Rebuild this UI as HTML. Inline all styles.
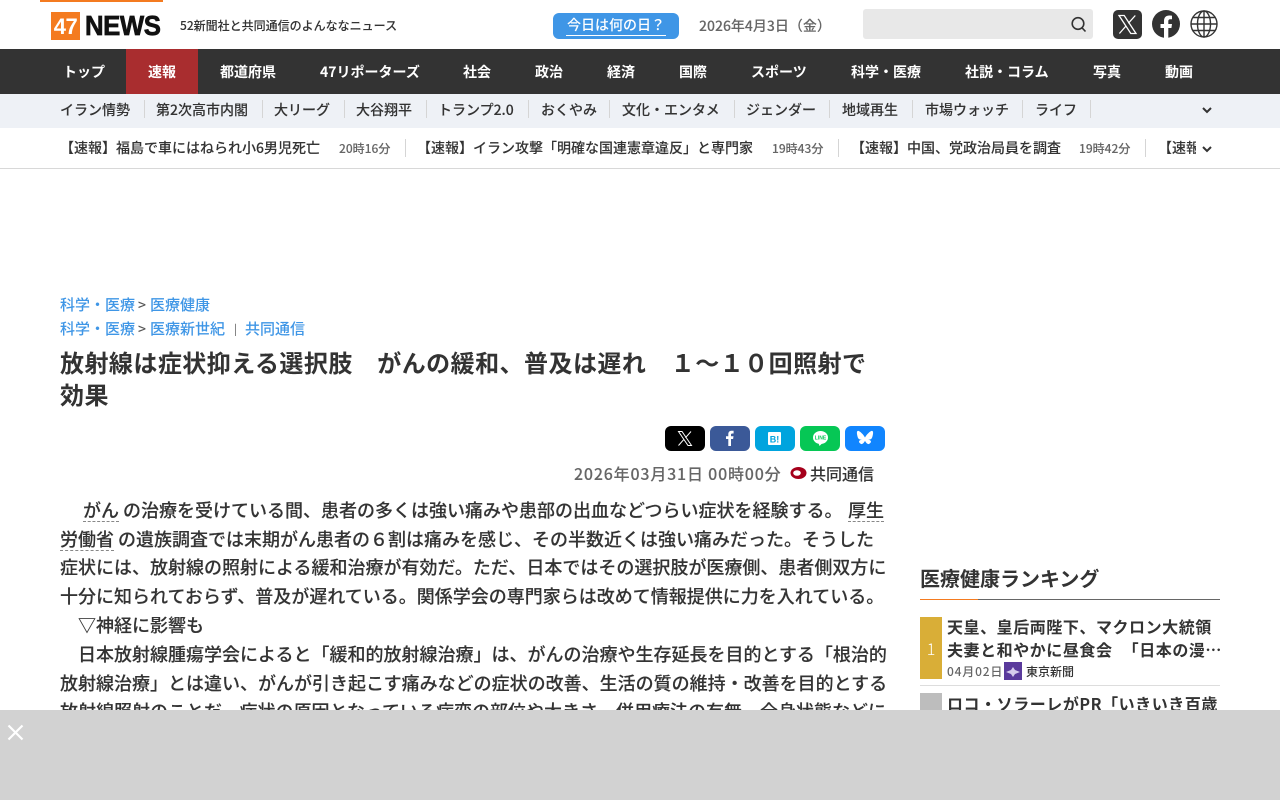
<!DOCTYPE html>
<html lang="ja"><head><meta charset="utf-8"><title>47NEWS</title>
<style>
*{margin:0;padding:0;box-sizing:border-box}
html,body{width:1280px;height:800px;overflow:hidden;background:#fff}
body{font-family:"Noto Sans CJK JP",sans-serif;color:#333;position:relative;font-weight:500}
.a{position:absolute;white-space:nowrap}
.nav{color:#fff;font-size:14px;top:49px;height:45px;line-height:46px;font-weight:700;text-align:center}
.sub{font-size:14px;top:94px;line-height:32px;color:#333;-webkit-text-stroke:.08px #333}
.sep{position:absolute;width:1px;background:#d5d5d5}
.tk{font-size:14px;top:128px;line-height:41px;color:#333;-webkit-text-stroke:.08px #333}
.tm{font-size:12px;top:128px;line-height:42px;color:#666;-webkit-text-stroke:.08px #666}
.b{font-size:18px;line-height:29px;height:29px;color:#333;left:60px;-webkit-text-stroke:.12px #333}
.u{display:inline-block;height:26px;line-height:29px;vertical-align:top;border-bottom:1px dashed #888}
.lnk{color:#3f96e6;font-size:15px}
.sh{position:absolute;top:426px;width:40px;height:25px;border-radius:6px}
.r{left:947px;font-size:16px;line-height:24px;font-weight:700;color:#333;letter-spacing:.55px}
</style></head><body>
<div class="a" style="left:40px;top:0;width:123px;height:2px;background:#f47b20"></div>
<div class="a" style="left:51px;top:12px;width:29px;height:28px;background:#f47b20;color:#fff;font:700 22px/29px 'Liberation Sans',sans-serif;text-align:center;letter-spacing:-.5px">47</div>
<div class="a" style="left:85px;top:10px;font:700 28px/32px 'Liberation Sans',sans-serif;color:#111;-webkit-text-stroke:.7px #111;letter-spacing:-.5px;transform:scaleX(.92);transform-origin:left">NEWS</div>
<div class="a" style="left:180px;top:16px;font-size:12px;line-height:20px;color:#333;-webkit-text-stroke:.06px #333">52新聞社と共同通信のよんななニュース</div>
<div class="a" style="left:553px;top:13px;width:126px;height:26px;background:#3f96e6;border-radius:6px;color:#fff;font-size:14px;line-height:25px;text-align:center"><span style="border-bottom:1px solid #fff;padding:0 1px">今日は何の日？</span></div>
<div class="a" style="left:699px;top:15px;font-size:14px;line-height:22px;color:#666;-webkit-text-stroke:.08px #666">2026年4月3日（金）</div>
<div class="a" style="left:863px;top:9px;width:230px;height:30px;background:#e8e8e8;border-radius:3px"></div>
<svg class="a" style="left:1070px;top:16px" width="17" height="17" viewBox="0 0 17 17" fill="none" stroke="#333" stroke-width="1.6"><circle cx="8" cy="7.5" r="5.8"/><path d="M12 11.800l3.500 3.700"/></svg>
<svg class="a" style="left:1113px;top:10px" width="29" height="29" viewBox="0 0 29 29"><rect width="29" height="29" rx="5" fill="#333"/><path d="M6 5.500h5.200l11.800 18h-5.200zM22.300 5.500l-7 7.800M13 16l-6.600 7.500" fill="none" stroke="#fff" stroke-width="1.300"/></svg>
<svg class="a" style="left:1152px;top:10px" width="28" height="28" viewBox="0 0 28 28"><circle cx="14" cy="14" r="14" fill="#333"/><path d="M12 28V18H8.500v-4H12v-3c0-3.600 2.100-5.500 5.300-5.500 1.500 0 2.700.2 2.700.2V9.200h-1.600c-1.600 0-2.100 1-2.100 2V14h3.700l-.6 4h-3.100v10z" fill="#fff"/></svg>
<svg class="a" style="left:1190px;top:10px" width="28" height="28" viewBox="0 0 28 28" fill="none" stroke="#333" stroke-width="1.400"><circle cx="14" cy="14" r="13"/><ellipse cx="14" cy="14" rx="6.500" ry="13"/><path d="M14 1v26M1 14h26M3 7.500h22M3 20.500h22"/></svg>

<div class="a" style="left:0;top:49px;width:1280px;height:45px;background:#333"></div>
<div class="a" style="left:126px;top:49px;width:72px;height:45px;background:#a92d2f"></div>
<div class="a nav" style="left:63px">トップ</div>
<div class="a nav" style="left:148px">速報</div>
<div class="a nav" style="left:220px">都道府県</div>
<div class="a nav" style="left:320px">47リポーターズ</div>
<div class="a nav" style="left:463px">社会</div>
<div class="a nav" style="left:535px">政治</div>
<div class="a nav" style="left:607px">経済</div>
<div class="a nav" style="left:679px">国際</div>
<div class="a nav" style="left:751px">スポーツ</div>
<div class="a nav" style="left:851px">科学・医療</div>
<div class="a nav" style="left:965px">社説・コラム</div>
<div class="a nav" style="left:1093px">写真</div>
<div class="a nav" style="left:1165px">動画</div>

<div class="a" style="left:0;top:94px;width:1280px;height:34px;background:#eef1f6"></div>
<div class="a sub" style="left:60px">イラン情勢</div><div class="sep" style="left:144px;top:100px;height:18px"></div>
<div class="a sub" style="left:156px">第2次高市内閣</div><div class="sep" style="left:262px;top:100px;height:18px"></div>
<div class="a sub" style="left:274px">大リーグ</div><div class="sep" style="left:344px;top:100px;height:18px"></div>
<div class="a sub" style="left:356px">大谷翔平</div><div class="sep" style="left:426px;top:100px;height:18px"></div>
<div class="a sub" style="left:438px">トランプ2.0</div><div class="sep" style="left:528px;top:100px;height:18px"></div>
<div class="a sub" style="left:541px">おくやみ</div><div class="sep" style="left:609px;top:100px;height:18px"></div>
<div class="a sub" style="left:622px">文化・エンタメ</div><div class="sep" style="left:734px;top:100px;height:18px"></div>
<div class="a sub" style="left:746px">ジェンダー</div><div class="sep" style="left:829px;top:100px;height:18px"></div>
<div class="a sub" style="left:842px">地域再生</div><div class="sep" style="left:912px;top:100px;height:18px"></div>
<div class="a sub" style="left:925px">市場ウォッチ</div><div class="sep" style="left:1022px;top:100px;height:18px"></div>
<div class="a sub" style="left:1035px">ライフ</div><div class="sep" style="left:1090px;top:100px;height:18px"></div>
<svg class="a" style="left:1201px;top:106px" width="12" height="10" viewBox="0 0 12 10" fill="none" stroke="#333" stroke-width="2"><path d="M2 2l4 4 4-4"/></svg>

<div class="a tk" style="left:60px">【速報】福島で車にはねられ小6男児死亡</div><div class="a tm" style="left:339px">20時16分</div><div class="sep" style="left:405px;top:139px;height:18px"></div>
<div class="a tk" style="left:417px">【速報】イラン攻撃「明確な国連憲章違反」と専門家</div><div class="a tm" style="left:772px">19時43分</div><div class="sep" style="left:838px;top:139px;height:18px"></div>
<div class="a tk" style="left:851px">【速報】中国、党政治局員を調査</div><div class="a tm" style="left:1079px">19時42分</div><div class="sep" style="left:1145px;top:139px;height:18px"></div>
<div class="a" style="left:1158px;top:128px;width:38px;height:40px;overflow:hidden"><div class="a tk" style="left:0;top:0">【速報】</div></div>
<svg class="a" style="left:1201px;top:145px" width="12" height="10" viewBox="0 0 12 10" fill="none" stroke="#333" stroke-width="2"><path d="M2 2l4 4 4-4"/></svg>
<div class="a" style="left:0;top:168px;width:1280px;height:1px;background:#d8d8d8"></div>

<div class="a lnk" style="left:60px;top:294px;line-height:22px">科学・医療<span class="a" style="left:78px;top:0;color:#555;font-size:14px">&gt;</span><span class="a" style="left:90px;top:0">医療健康</span></div>
<div class="a lnk" style="left:60px;top:318px;line-height:22px">科学・医療<span class="a" style="left:78px;top:0;color:#555;font-size:14px">&gt;</span><span class="a" style="left:90px;top:0">医療新世紀</span><span class="a" style="left:174px;top:0;color:#555;font-size:11px;font-weight:400">|</span><span class="a" style="left:185px;top:0">共同通信</span></div>

<div class="a" style="left:60px;top:344px;font-size:24px;line-height:36px;font-weight:700;color:#333;letter-spacing:.46px">放射線は症状抑える選択肢　がんの緩和、普及は遅れ　１～１０回照射で</div>
<div class="a" style="left:60px;top:376px;font-size:24px;line-height:36px;font-weight:700;color:#333;letter-spacing:.46px">効果</div>

<div class="sh" style="left:665px;background:#000"><svg width="40" height="25" viewBox="0 0 40 25"><path d="M13.500 5.500h3.500l9.500 14h-3.500zM26 5.500l-5.600 6.300M18.500 13.800l-5 5.700" fill="none" stroke="#fff" stroke-width="1"/></svg></div>
<div class="sh" style="left:710px;background:#3b5998"><svg width="40" height="25" viewBox="0 0 40 25"><path d="M18.300 20v-7h-2.300V10.200h2.300V8.300c0-2.300 1.300-3.500 3.300-3.500h2v2.700h-1.300c-1 0-1.300.5-1.300 1.200v1.500h2.500l-.4 2.800h-2.100v7z" fill="#fff"/></svg></div>
<div class="sh" style="left:755px;background:#00a4de"><svg width="40" height="25" viewBox="0 0 40 25"><rect x="13" y="6" width="13" height="13" rx="1" fill="#fff"/><text x="19.500" y="16.500" font-size="9" font-weight="700" fill="#00a4de" text-anchor="middle" font-family="Liberation Sans">B!</text></svg></div>
<div class="sh" style="left:800px;background:#06c755"><svg width="40" height="25" viewBox="0 0 40 25"><ellipse cx="20.500" cy="11.500" rx="7.500" ry="6.500" fill="#fff"/><path d="M18.500 17l1 3 3-3z" fill="#fff"/><text x="20.500" y="13.500" font-size="5" font-weight="700" fill="#06c755" text-anchor="middle" font-family="Liberation Sans">LINE</text></svg></div>
<div class="sh" style="left:845px;background:#1185fe"><svg width="40" height="25" viewBox="0 0 40 25"><path d="M20 11.500c-.8-1.700-3.200-4.600-5.200-5.900-1.900-1.300-2.900-.8-2.900 1.300 0 1.300.7 4.500 1.300 5.300.7 1.100 2.300 1.500 3.700 1.400-2.600.4-3.600 1.900-2.300 3.300 2.100 2.400 3.900.8 5.400-2 1.500 2.800 3.300 4.400 5.400 2 1.300-1.400.3-2.900-2.300-3.300 1.400.1 3-.3 3.700-1.400.6-.8 1.300-4 1.300-5.300 0-2.100-1-2.600-2.900-1.300-2 1.300-4.400 4.200-5.200 5.900z" fill="#fff"/></svg></div>

<div class="a" style="left:574px;top:461px;font-size:16px;line-height:24px;color:#666;letter-spacing:.8px;-webkit-text-stroke:.08px #666">2026年03月31日 00時00分</div>
<svg class="a" style="left:790px;top:466px" width="17" height="14" viewBox="0 0 17 14"><ellipse cx="8.500" cy="7" rx="8" ry="6" fill="#a5001b"/><ellipse cx="7" cy="7" rx="3.800" ry="2.800" fill="#fff"/></svg>
<div class="a" style="left:810px;top:461px;font-size:16px;line-height:24px;color:#333;-webkit-text-stroke:.08px #333">共同通信</div>

<div class="a b" style="top:496px"><span style="margin-left:23px" class="u">がん</span> の治療を受けている間、患者の多くは強い痛みや患部の出血などつらい症状を経験する。<span class="u" style="position:absolute;left:788px;top:0">厚生</span></div>
<div class="a b" style="top:525px"><span class="u">労働省</span> の遺族調査では末期がん患者の６割は痛みを感じ、その半数近くは強い痛みだった。そうした</div>
<div class="a b" style="top:553px">症状には、放射線の照射による緩和治療が有効だ。ただ、日本ではその選択肢が医療側、患者側双方に</div>
<div class="a b" style="top:582px">十分に知られておらず、普及が遅れている。関係学会の専門家らは改めて情報提供に力を入れている。</div>
<div class="a b" style="top:611px;left:78px">▽神経に影響も</div>
<div class="a b" style="top:640px;left:78px">日本放射線腫瘍学会によると「緩和的放射線治療」は、がんの治療や生存延長を目的とする「根治的</div>
<div class="a b" style="top:669px">放射線治療」とは違い、がんが引き起こす痛みなどの症状の改善、生活の質の維持・改善を目的とする</div>
<div class="a b" style="top:697px">放射線照射のことだ。症状の原因となっている病変の部位や大きさ、併用療法の有無、全身状態などに</div>

<div class="a" style="left:920px;top:563px;font-size:20px;line-height:30px;font-weight:700;color:#333">医療健康ランキング</div>
<div class="a" style="left:920px;top:599px;width:300px;height:1px;background:#666"></div>
<div class="a" style="left:920px;top:599px;width:58px;height:1px;background:#f47b20"></div>
<div class="a" style="left:920px;top:617px;width:22px;height:62px;background:#d9ae37;color:#fff;font-size:16px;font-weight:300;line-height:62px;text-align:center">1</div>
<div class="a r" style="top:614px">天皇、皇后両陛下、マクロン大統領</div>
<div class="a r" style="top:637px;word-spacing:6px">夫妻と和やかに昼食会 「日本の漫…</div>
<div class="a" style="left:947px;top:662px;font-size:12px;line-height:20px;color:#666;letter-spacing:.8px;font-weight:500">04月02日</div>
<div class="a" style="left:1004px;top:662px;width:18px;height:18px;background:#5a3a9c"><svg width="18" height="18" viewBox="0 0 18 18"><path d="M9 4l2 3 5 2-5 2-2 3-2-3-5-2 5-2z" fill="#d6cbec"/></svg></div>
<div class="a" style="left:1026px;top:662px;font-size:12px;line-height:20px;color:#333;font-weight:500">東京新聞</div>
<div class="a" style="left:920px;top:685px;width:300px;height:1px;background:#ddd"></div>
<div class="a" style="left:920px;top:693px;width:22px;height:30px;background:#bdbdbd"></div>
<div class="a r" style="top:691px">ロコ・ソラーレがPR「いきいき百歳</div>

<div class="a" style="left:0;top:710px;width:1280px;height:90px;background:#d2d2d2"></div>
<svg class="a" style="left:7px;top:724px" width="17" height="17" viewBox="0 0 17 17" fill="none" stroke="#fff" stroke-width="2.200"><path d="M1.500 1.500l14 14M15.500 1.500l-14 14"/></svg>
</body></html>
